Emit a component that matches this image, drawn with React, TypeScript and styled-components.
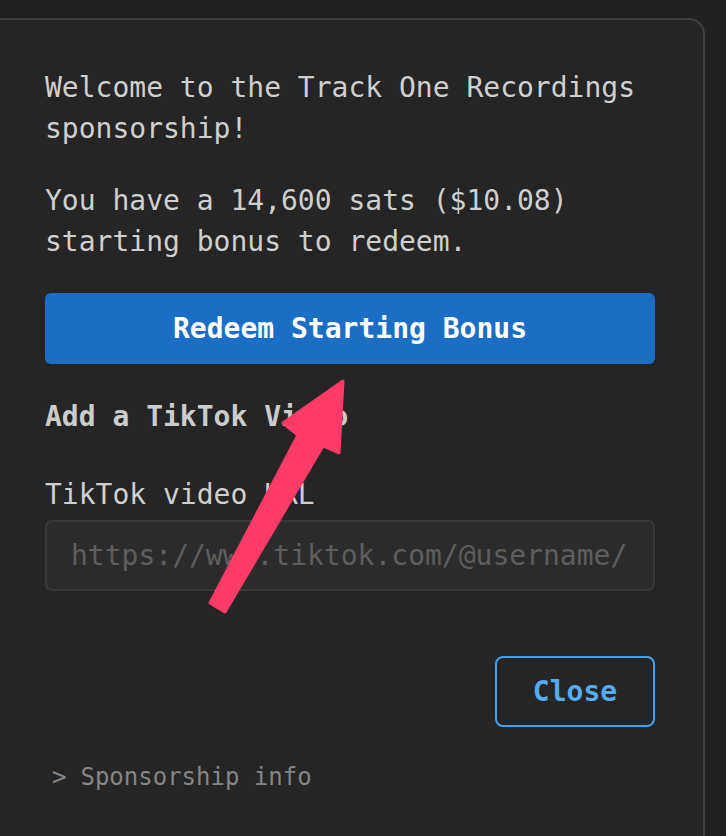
import React from "react";
import styled, { createGlobalStyle } from "styled-components";

const Global = createGlobalStyle`
  html, body { margin: 0; padding: 0; background: #212121; }
  body { font-family: "DejaVu Sans Mono", "Liberation Mono", monospace; overflow: hidden; }
  * { box-sizing: border-box; }
`;

const Page = styled.div`
  position: relative;
  width: 726px;
  height: 836px;
  overflow: hidden;
  padding-top: 18px;
`;

const Panel = styled.section`
  margin-left: -14px;
  width: 719px;
  min-height: 900px;
  background: #252525;
  border: 2px solid #3f3f3f;
  border-radius: 16px;
  padding: 47px 48px 0 57px;
  display: flex;
  flex-direction: column;
`;

const Para = styled.p`
  margin: 0 0 31px;
  font-size: 28px;
  line-height: 41px;
  color: #cfcfcf;
`;

const PrimaryButton = styled.button`
  margin-top: 0;
  height: 71px;
  width: 100%;
  border: none;
  border-radius: 6px;
  background: #1b6ec4;
  color: #ffffff;
  font-family: inherit;
  font-weight: bold;
  font-size: 28px;
`;

const Heading = styled.h3`
  margin: 32px 0 0;
  font-size: 28px;
  line-height: 41px;
  font-weight: bold;
  color: #cccccc;
`;

const Label = styled.label`
  margin-top: 37px;
  font-size: 28px;
  line-height: 41px;
  color: #cfcfcf;
`;

const Input = styled.input`
  margin-top: 5px;
  height: 71px;
  width: 100%;
  background: #2c2c2c;
  border: 2px solid #393939;
  border-radius: 7px;
  padding: 0 24px;
  font-family: inherit;
  font-size: 28px;
  color: #ddd;
  outline: none;
  &::placeholder { color: #5e5e5e; }
`;

const Actions = styled.div`
  margin-top: 65px;
  display: flex;
  justify-content: flex-end;
`;

const OutlineButton = styled.button`
  width: 160px;
  height: 71px;
  border: 2px solid #4a9fe2;
  border-radius: 8px;
  background: transparent;
  color: #56acee;
  font-family: inherit;
  font-weight: bold;
  font-size: 28px;
`;

const Details = styled.div`
  margin-top: 33px;
  margin-left: 7px;
  display: flex;
  align-items: center;
  gap: 14px;
  font-size: 24px;
  line-height: 35px;
  color: #858585;
`;

const Overlay = styled.svg`
  position: absolute;
  left: 0;
  top: 0;
  pointer-events: none;
`;

export default function App() {
  return (
    <Page>
      <Global />
      <Panel>
        <Para>Welcome to the Track One Recordings sponsorship!</Para>
        <Para>You have a 14,600 sats ($10.08) starting bonus to redeem.</Para>
        <PrimaryButton>Redeem Starting Bonus</PrimaryButton>
        <Heading>Add a TikTok Video</Heading>
        <Label>TikTok video URL</Label>
        <Input placeholder="https://www.tiktok.com/@username/" />
        <Actions>
          <OutlineButton>Close</OutlineButton>
        </Actions>
        <Details>
          <span>&gt;</span>
          <span>Sponsorship info</span>
        </Details>
      </Panel>
      <Overlay width="726" height="836" viewBox="0 0 726 836">
        <polygon
          points="343,381 339,453 323,446 225,612 210,603 298,435 283,423"
          fill="#ff3b68"
          stroke="#ff3b68"
          strokeWidth="3"
          strokeLinejoin="round"
        />
      </Overlay>
    </Page>
  );
}
